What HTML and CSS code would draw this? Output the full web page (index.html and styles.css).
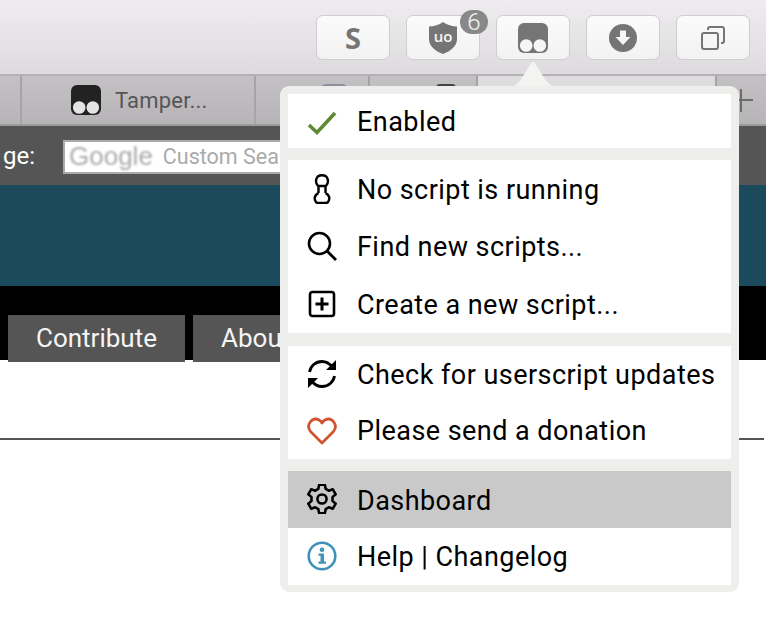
FILE: index.html
```html
<!DOCTYPE html>
<html>
<head>
  <meta charset="utf-8">
  <meta name="viewport" content="width=device-width, initial-scale=1">
  <link rel="stylesheet" href="styles.css">
</head>
<body>
  <div class="toolbar">
    <div class="tool-btn"><span class="tool-s">S</span></div>
    <div class="tool-btn">
      <svg class="ico-shield" viewBox="0 0 28 32"><path d="M14 0C10 3 5 4.300 0 4.500V17C0 24 6 29 14 32C22 29 28 24 28 17V4.500C23 4.300 18 3 14 0Z" fill="#757575"/><text x="14" y="19.500" class="shield-text">uo</text></svg>
      <span class="badge">6</span>
    </div>
    <div class="tool-btn">
      <svg class="ico-tm" viewBox="0 0 30 30"><rect width="30" height="30" rx="6" fill="#757575"/><circle cx="8.200" cy="22.500" r="6.300" fill="#f6f6f6"/><circle cx="21.800" cy="22.500" r="6.300" fill="#f6f6f6"/></svg>
    </div>
    <div class="tool-btn">
      <svg class="ico-dl" viewBox="0 0 28 28"><circle cx="14" cy="14" r="14" fill="#757575"/><path d="M11 6.500H17V13H21.500L14 21L6.500 13H11Z" fill="#f6f6f6"/></svg>
    </div>
    <div class="tool-btn">
      <svg class="ico-tabs" viewBox="0 0 24 24"><rect x="1" y="7" width="16" height="16" rx="2" fill="none" stroke="#757575" stroke-width="2"/><path d="M7 4V3C7 2 8 1 9 1H21C22 1 23 2 23 3V15C23 16 22 17 21 17H20" fill="none" stroke="#757575" stroke-width="2"/></svg>
    </div>
  </div>

  <div class="tabstrip">
    <div class="tab tab-first"></div>
    <div class="tab tab-main">
      <svg class="tab-tm" viewBox="0 0 30 30"><rect width="30" height="30" rx="6" fill="#222"/><circle cx="8.200" cy="22.500" r="6.300" fill="#e4e4e4"/><circle cx="21.800" cy="22.500" r="6.300" fill="#e4e4e4"/></svg>
      <span>Tamper...</span>
    </div>
    <div class="tab tab-small"><span class="peek peek-blue"></span></div>
    <div class="tab tab-small2"><span class="peek peek-dark"></span></div>
    <div class="tab tab-active"></div>
    <div class="tab tab-new"><span class="plus"></span></div>
  </div>

  <div class="searchbar">
    <div class="search-label">ge:</div>
    <div class="search-box"><span class="google">Google</span><span class="custom">Custom Search</span></div>
  </div>

  <div class="banner"></div>

  <div class="nav">
    <div class="nav-tab nav-contribute">Contribute</div>
    <div class="nav-tab nav-about">About</div>
  </div>

  <div class="content"><hr class="rule"></div>

  <div class="popup-arrow"></div>
  <div class="popup">
    <div class="section sec-top">
      <div class="row">
        <svg class="ico" viewBox="0 0 30 30"><path d="M2 19L10 26.500L28 7" fill="none" stroke="#5f8a35" stroke-width="3.600"/></svg>
        <span>Enabled</span>
      </div>
    </div>
    <div class="section">
      <div class="row">
        <svg class="ico" viewBox="0 0 30 30"><path d="M11 12C8 9 8 1.200 15 1.200C22 1.200 22 9 19 12H11ZM11.500 12V19M18.500 12V19M11.500 19C8 21 7 23 8 26C8.500 28 10 29 11 29H19C20 29 21.500 28 22 26C23 23 22 21 18.500 19" fill="none" stroke="#000" stroke-width="2.400" stroke-linejoin="round"/></svg>
        <span>No script is running</span>
      </div>
      <div class="row">
        <svg class="ico" viewBox="0 0 30 30"><circle cx="12.500" cy="12.500" r="10.500" fill="none" stroke="#000" stroke-width="2.600"/><path d="M20 20L29 29" stroke="#000" stroke-width="2.800"/></svg>
        <span>Find new scripts...</span>
      </div>
      <div class="row">
        <svg class="ico" viewBox="0 0 30 30"><rect x="3" y="3" width="24" height="24" rx="2.500" fill="none" stroke="#000" stroke-width="2.600"/><path d="M15 8.500V21.500M8.500 15H21.500" stroke="#000" stroke-width="3"/></svg>
        <span>Create a new script...</span>
      </div>
    </div>
    <div class="section sec-third">
      <div class="row">
        <svg class="ico" viewBox="0 0 30 30"><path d="M2.500 13C3.500 7 8.500 2.500 15 2.500C19.500 2.500 23 5 25.500 8M27.500 17C26.500 23 21.500 27.500 15 27.500C10.500 27.500 7 25 4.500 22" fill="none" stroke="#000" stroke-width="2.800"/><path d="M29 1V11H19Z M1 29V19H11Z" fill="#000"/></svg>
        <span>Check for userscript updates</span>
      </div>
      <div class="row row-heart">
        <svg class="ico" viewBox="0 0 30 28"><path d="M15 26L3.500 14.500C-1.500 8 5 -0.500 12 3C13.500 3.800 14.500 5 15 6C15.500 5 16.500 3.800 18 3C25 -0.500 31.500 8 26.500 14.500Z" fill="none" stroke="#d2532f" stroke-width="2.800" stroke-linejoin="round"/></svg>
        <span>Please send a donation</span>
      </div>
    </div>
    <div class="section sec-last">
      <div class="row row-hover">
        <svg class="ico" viewBox="1.500 1.500 21 21"><path d="M10 2H14L14.600 5C15.400 5.300 16 5.700 16.700 6.200L19.600 5.200L21.600 8.700L19.300 10.700C19.400 11.500 19.400 12.500 19.300 13.300L21.600 15.300L19.600 18.800L16.700 17.800C16 18.300 15.400 18.700 14.600 19L14 22H10L9.400 19C8.600 18.700 8 18.300 7.300 17.800L4.400 18.800L2.400 15.300L4.700 13.300C4.600 12.500 4.600 11.500 4.700 10.700L2.400 8.700L4.400 5.200L7.300 6.200C8 5.700 8.600 5.300 9.400 5Z" fill="none" stroke="#000" stroke-width="1.800" stroke-linejoin="round"/><circle cx="12" cy="12" r="3.200" fill="none" stroke="#000" stroke-width="1.800"/></svg>
        <span>Dashboard</span>
      </div>
      <div class="row">
        <svg class="ico" viewBox="0 0 30 30"><circle cx="15" cy="15" r="13.300" fill="none" stroke="#3f93b8" stroke-width="2.600"/><circle cx="15" cy="8.800" r="2.300" fill="#3f93b8"/><path d="M11.500 12.500H17V20.500H19V22.800H11.500V20.500H13.500V14.800H11.500Z" fill="#3f93b8"/></svg>
        <span>Help | Changelog</span>
      </div>
    </div>
  </div>
</body>
</html>
```

FILE: styles.css
```css
html, body {margin: 0; padding: 0;}
body {width: 766px; height: 632px; overflow: hidden; background: #fff; font-family: Roboto, "Liberation Sans", sans-serif; position: relative;}

/* browser chrome */
.toolbar {
  height: 76px;
  padding-top: 15px;
  padding-right: 16px;
  box-sizing: border-box;
  display: flex;
  justify-content: flex-end;
  gap: 16px;
  background: linear-gradient(#eeecee, #dddbdd);
  border-bottom: 2px solid #b3b1b3;
}
.tool-btn {
  width: 74px;
  height: 45px;
  box-sizing: border-box;
  border: 1px solid #cfcdcf;
  border-radius: 7px;
  background: linear-gradient(#fbfbfb, #f2f2f2);
  display: flex;
  align-items: center;
  justify-content: center;
  position: relative;
}
.tool-s {font-family: "Open Sans", sans-serif; font-weight: 700; font-size: 29px; color: #757575;}
.ico-shield {width: 28px; height: 32px;}
.shield-text {font-family: "Open Sans", sans-serif; font-size: 15px; font-weight: 600; fill: #f6f6f6; text-anchor: middle;}
.ico-tm {width: 30px; height: 30px; margin-top: 1px;}
.ico-dl {width: 28px; height: 28px;}
.ico-tabs {width: 24px; height: 24px;}
.badge {
  position: absolute;
  left: 53px;
  top: -6px;
  width: 28px;
  height: 24px;
  border-radius: 12px;
  background: #888;
  color: #f4f4f4;
  font-size: 24px;
  font-weight: 300;
  line-height: 24px;
  text-align: center;
}

.tabstrip {
  display: flex;
  height: 50px;
  box-sizing: border-box;
  background: #bdbbbd;
  border-bottom: 2px solid #9c9a9c;
}
.tab {box-sizing: border-box; border-right: 2px solid #a5a3a5; background: linear-gradient(#c3c1c3, #b6b4b6); position: relative;}
.tab-first {width: 22px;}
.tab-main {width: 234px; display: flex; align-items: center; padding-left: 49px; gap: 14px; font-size: 22px; letter-spacing: 0.2px; color: #555;}
.tab-tm {width: 30px; height: 30px;}
.tab-small {width: 114px;}
.tab-small2 {width: 108px;}
.tab-active {width: 239px; background: #dedcde;}
.tab-new {flex: 1; border-right: 0;}
.peek {position: absolute; top: 8px; height: 6px; border-radius: 6px 6px 0 0;}
.peek-blue {left: 64px; width: 28px; background: #8f8f9c;}
.peek-dark {left: 66px; width: 20px; height: 4px; top: 8px; background: #444;}
.plus {position: absolute; left: 12px; top: 13px; width: 24px; height: 24px;}
.plus:before {content: ""; position: absolute; left: 11px; top: 0; width: 2px; height: 23px; background: #6c6a6c;}
.plus:after {content: ""; position: absolute; left: 0; top: 10px; width: 24px; height: 2px; background: #6c6a6c;}

/* page behind the popup */
.searchbar {height: 59px; background: #555; display: flex; align-items: center; color: #fff; font-size: 24px;}
.search-label {width: 63px; padding-left: 3px; box-sizing: border-box; white-space: nowrap; flex: none;}
.search-box {
  width: 400px;
  height: 34px;
  margin-top: 2px;
  box-sizing: border-box;
  border: 2px solid #aaa;
  background: #fff;
  display: flex;
  align-items: center;
  padding-left: 4px;
  white-space: nowrap;
  flex: none;
}
.google {font-family: "Liberation Sans", sans-serif; font-size: 26px; color: #aaa; filter: blur(1px); margin-right: 10px;}
.custom {font-size: 21.500px; color: #aaa;}
.banner {height: 101px; background: #1b4a5c;}
.nav {height: 74px; background: #000; display: flex; align-items: flex-end; gap: 8px; padding-left: 8px;}
.nav-tab {height: 47px; margin-bottom: -2px; background: #555; color: #f4f4f4; font-size: 26px; line-height: 46px; box-sizing: border-box; position: relative;}
.nav-contribute {width: 177px; text-align: center;}
.nav-about {width: 200px; padding-left: 28px;}
.content {padding-top: 78px;}
.rule {margin: 0 2px 0 0; border: 0; height: 2px; background: #555;}

/* tampermonkey popup */
.popup-arrow {
  position: absolute;
  left: 512px;
  top: 62px;
  width: 42px;
  height: 26px;
  background: #f3f3f1;
  clip-path: polygon(50% 0, 54% 2%, 80% 70%, 100% 100%, 0 100%, 20% 70%, 46% 2%);
}
.popup {
  position: absolute;
  left: 280px;
  top: 86px;
  width: 459px;
  height: 506px;
  box-sizing: border-box;
  padding: 8px;
  border-radius: 9px;
  background: #eeeeec;
  display: flex;
  flex-direction: column;
  gap: 12px;
  color: #000;
  font-size: 27px;
}
.section {background: #fff;}
.row {height: 57.670px; display: flex; align-items: center; padding-left: 19px; gap: 20px; white-space: nowrap; letter-spacing: 0.45px;}
.row span {padding-top: 2px;}
.sec-top .row {height: 54px;}
.sec-third {margin-top: 1px;}
.sec-third .row {height: 56.500px;}
.sec-third .row-heart span {padding-top: 1px;}
.sec-last .row {height: 57px;}
.row-hover {background: #c9c9c9;}
.row-hover span {padding-top: 4px;}
.ico {width: 30px; height: 30px; flex: none;}
```
